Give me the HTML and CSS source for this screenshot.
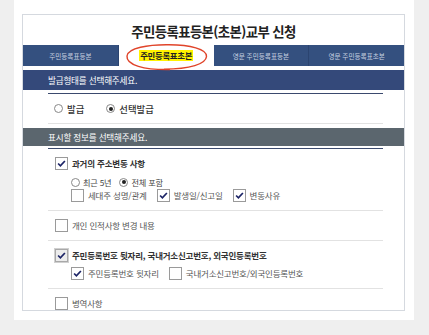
FILE: index.html
```html
<!DOCTYPE html>
<html lang="ko">
<head>
<meta charset="utf-8">
<link rel="stylesheet" href="styles.css">
</head>
<body>
<div class="panel">
  <div class="box">
    <h1 class="title">주민등록표등본(초본)교부 신청</h1>
    <div class="tabs">
      <div class="tab">주민등록표등본</div>
      <div class="tab active"><span class="hl">주민등록표초본</span>
        <svg class="circle" width="86" height="28" viewBox="0 0 86 28"><path d="M46 26.5 C 20 27, 2 22, 3 13 C 4 5, 24 1.5, 45 1.8 C 66 2, 83 6, 82.5 13.5 C 82 21, 66 26, 40 26.2" fill="none" stroke="#e0442a" stroke-width="1.4"/></svg>
      </div>
      <div class="tab">영문 주민등록표등본</div>
      <div class="tab">영문 주민등록표초본</div>
    </div>
    <div class="sec-head navy">발급형태를 선택해주세요.</div>
    <div class="sec-body first">
      <div class="radio-row">
        <label class="opt"><span class="radio"></span>발급</label>
        <label class="opt"><span class="radio on"></span>선택발급</label>
      </div>
    </div>
    <div class="sec-head grey">표시할 정보를 선택해주세요.</div>
    <div class="sec-body second">
      <div class="item">
        <div class="line main"><span class="cb on"><svg viewBox="0 0 13 13"><polyline points="2.5,6.5 5.2,9.3 10.5,3.5" fill="none" stroke="#1c2466" stroke-width="2"/></svg></span><span class="strong">과거의 주소변동 사항</span></div>
        <div class="line sub radios">
          <label class="opt small"><span class="radio"></span>최근 5년</label>
          <label class="opt small"><span class="radio on"></span>전체 포함</label>
        </div>
        <div class="line sub">
          <span class="cb"></span><span class="lab">세대주 성명/관계</span>
          <span class="cb on"><svg viewBox="0 0 13 13"><polyline points="2.5,6.5 5.2,9.3 10.5,3.5" fill="none" stroke="#1c2466" stroke-width="2"/></svg></span><span class="lab">발생일/신고일</span>
          <span class="cb on"><svg viewBox="0 0 13 13"><polyline points="2.5,6.5 5.2,9.3 10.5,3.5" fill="none" stroke="#1c2466" stroke-width="2"/></svg></span><span class="lab">변동사유</span>
        </div>
      </div>
      <div class="item">
        <div class="line main"><span class="cb"></span><span class="plain">개인 인적사항 변경 내용</span></div>
      </div>
      <div class="item">
        <div class="line main"><span class="cb on focus"><svg viewBox="0 0 13 13"><polyline points="2.5,6.5 5.2,9.3 10.5,3.5" fill="none" stroke="#1c2466" stroke-width="2"/></svg></span><span class="strong">주민등록번호 뒷자리, 국내거소신고번호, 외국인등록번호</span></div>
        <div class="line sub sub2">
          <span class="cb on"><svg viewBox="0 0 13 13"><polyline points="2.5,6.5 5.2,9.3 10.5,3.5" fill="none" stroke="#1c2466" stroke-width="2"/></svg></span><span class="lab">주민등록번호 뒷자리</span>
          <span class="cb"></span><span class="lab">국내거소신고번호/외국인등록번호</span>
        </div>
      </div>
      <div class="item last">
        <div class="line main"><span class="cb"></span><span class="plain">병역사항</span></div>
      </div>
    </div>
  </div>
</div>
</body>
</html>
```

FILE: styles.css
```css
* { box-sizing: border-box; }
html, body { margin: 0; padding: 0; }
body {
  background: #efefef;
  font-family: "Noto Sans CJK KR", "Noto Sans", sans-serif;
  color: #333;
  width: 429px;
  height: 335px;
  overflow: hidden;
}
.panel {
  margin-left: 14px;
  width: 400px;
  height: 320px;
  background: #fff;
  padding: 14px 9px 9px 8px;
}
.box {
  border: 1px solid #d5d9df;
  height: 297px;
  overflow: hidden;
}
.title {
  margin: 0;
  height: 30px;
  display: flex;
  align-items: center;
  justify-content: center;
  font-size: 13.4px;
  font-weight: 700;
  letter-spacing: -0.6px;
  color: #222;
  padding-top: 2px;
}
.tabs {
  display: flex;
  height: 21px;
}
.tab {
  flex: 1;
  background: #34507f;
  color: #c7d0e0;
  font-size: 6.6px;
  display: flex;
  align-items: center;
  justify-content: center;
  border-right: 1px solid #2b4470;
}
.tab:last-child { border-right: none; }
.tab.active {
  background: #fff;
  position: relative;
  border-right: none;
}
.hl {
  background: #fff200;
  color: #222;
  font-weight: 700;
  font-size: 8.4px;
  letter-spacing: -0.3px;
  padding: 1px 1px;
  line-height: 9px;
}
.circle {
  position: absolute;
  left: 5px;
  top: -2px;
}
.sec-head {
  color: #fff;
  font-size: 8.6px;
  padding-left: 25px;
  display: flex;
  align-items: center;
  letter-spacing: -0.2px;
}
.sec-head.navy {
  background: #34497a;
  height: 20px;
  margin-top: 4px;
}
.sec-head.grey {
  background: #5b666e;
  height: 18px;
}
.sec-body {
  margin: 0 21px 0 25px;
}
.sec-body.first {
  margin-top: 3px;
  border-top: 1px solid #3b4a6e;
  border-bottom: 1px solid #e2e2e2;
  margin-bottom: 4px;
}
.radio-row {
  height: 29px;
  display: flex;
  align-items: center;
  gap: 22px;
  padding-left: 6px;
  font-size: 9.4px;
  font-weight: 500;
  color: #333;
}
.opt {
  display: inline-flex;
  align-items: center;
  gap: 4px;
}
.radio {
  width: 9px;
  height: 9px;
  border: 1px solid #888;
  border-radius: 50%;
  display: inline-flex;
  align-items: center;
  justify-content: center;
  background: #fff;
}
.radio.on::after {
  content: "";
  width: 4px;
  height: 4px;
  border-radius: 50%;
  background: #222;
}
.sec-body.second {
  margin-top: 2px;
  border-top: 1px solid #3b4a6e;
}
.item {
  border-bottom: 1px solid #e2e2e2;
  padding: 7px 0 8px 7px;
}
.item.last { border-bottom: none; }
.line {
  display: flex;
  align-items: center;
  font-size: 8.5px;
  letter-spacing: -0.2px;
}
.line.main { height: 14px; }
.line.sub {
  padding-left: 16px;
  height: 14px;
}
.line.sub2 { margin-top: 4px; }
.line.radios {
  margin-top: 6px;
  height: 12px;
  gap: 8px;
}
.opt.small { gap: 3px; font-size: 8.2px; color: #444; }
.cb {
  width: 13px;
  height: 13px;
  border: 1px solid #9a9a9a;
  background: #fff;
  flex: none;
  display: inline-flex;
  margin-right: 4px;
}
.cb svg { width: 11px; height: 11px; }
.cb.focus {
  border-color: #a8a8a8;
  background: #ececec;
  box-shadow: 0 0 0 1px #d0d0d0;
}
.strong { font-weight: 700; color: #333; }
.plain { color: #555; }
.lab { color: #555; margin-right: 10px; }
```
